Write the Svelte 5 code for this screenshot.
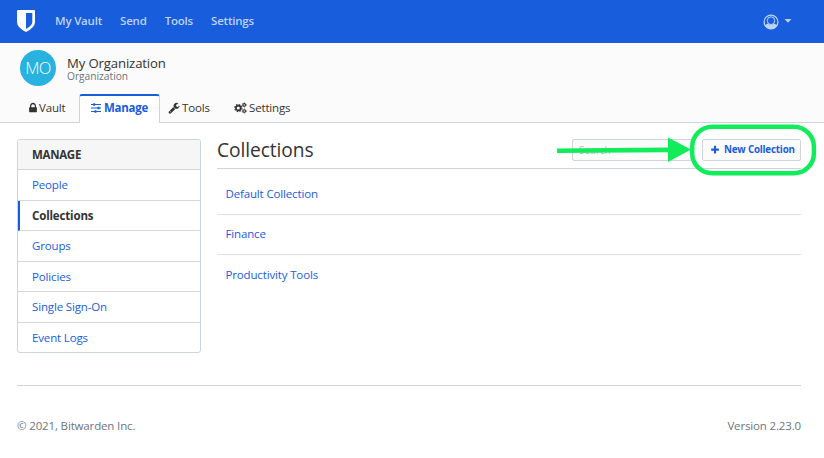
<script>
  const nav = ['My Vault', 'Send', 'Tools', 'Settings'];
  const menu = ['People', 'Collections', 'Groups', 'Policies', 'Single Sign-On', 'Event Logs'];
  const collections = ['Default Collection', 'Finance', 'Productivity Tools'];
</script>

<div class="page">
  <header>
    <svg class="logo" width="18" height="22" viewBox="0 0 18 22">
      <path d="M1 0h16q1 0 1 1v11q0 5.500-9 10Q0 17.500 0 12V1q0-1 1-1z" fill="#fff" />
      <path d="M9 3h6.300v9q0 3.500-6.300 7z" fill="#175ddc" />
    </svg>
    <nav>
      {#each nav as item}<a href="#top">{item}</a>{/each}
    </nav>
    <div class="account">
      <svg width="16" height="16" viewBox="0 0 16 16">
        <circle cx="8" cy="8" r="6.900" fill="none" stroke="currentColor" stroke-width="1.300" />
        <path d="M2.200 12Q3 9.900 5.200 9.500Q8 12.500 10.800 9.500Q13 9.900 13.800 12Q12 15 8 15T2.200 12z" fill="currentColor" />
        <ellipse cx="8" cy="6.700" rx="3.700" ry="3.900" fill="none" stroke="currentColor" stroke-width="1" />
      </svg>
      <svg width="8" height="4" viewBox="0 0 8 4"><path d="M.5 0h7L4 3.700z" fill="currentColor" /></svg>
    </div>
  </header>

  <section class="org">
    <div class="identity">
      <div class="avatar">MO</div>
      <div class="names">
        <div class="name">My Organization</div>
        <div class="kind">Organization</div>
      </div>
    </div>
    <div class="tabs">
      <a class="tab vault" href="#vault">
        <svg width="12" height="12" viewBox="0 0 1792 1792"><path fill="currentColor" d="M640 768h512v-192q0-106-75-181t-181-75-181 75-75 181v192zm832 96v576q0 40-28 68t-68 28h-960q-40 0-68-28t-28-68v-576q0-40 28-68t68-28h32v-192q0-184 132-316t316-132 316 132 132 316v192h32q40 0 68 28t28 68z" /></svg>
        <span>Vault</span>
      </a>
      <a class="tab active" href="#manage">
        <svg width="10" height="10" viewBox="0 0 10 10" fill="currentColor">
          <path d="M0 1h10v1H0zM0 4.500h10v1H0zM0 8h10v1H0z" />
          <rect x="2.200" y="0.200" width="2" height="2.600" rx=".4" />
          <rect x="6.500" y="3.700" width="2" height="2.600" rx=".4" />
          <rect x="3.500" y="7.200" width="2" height="2.600" rx=".4" />
        </svg>
        <span>Manage</span>
      </a>
      <a class="tab tools" href="#tools">
        <svg width="12" height="12" viewBox="0 0 1792 1792"><path fill="currentColor" d="M448 1472q0-26-19-45t-45-19-45 19-19 45 19 45 45 19 45-19 19-45zm644-420l-682 682q-37 37-90 37-52 0-91-37l-106-108q-38-36-38-90 0-53 38-91l681-681q39 98 114.500 173.500t173.500 114.500zm634-435q0 39-23 106-47 134-164.500 217.500t-258.500 83.500q-185 0-316.500-131.500t-131.500-316.500 131.500-316.500 316.500-131.500q58 0 121.500 16.500t107.500 46.500q16 11 16 28t-16 28l-293 169v224l193 107q5-3 79-48.500t135.500-81 70.500-35.500q15 0 23.500 10t8.500 25z" /></svg>
        <span>Tools</span>
      </a>
      <a class="tab settings" href="#settings">
        <svg width="13" height="12" viewBox="0 0 13 12" fill="none" stroke="currentColor">
          <circle cx="4.300" cy="6" r="2.400" stroke-width="1.700" />
          <circle cx="4.300" cy="6" r="3.600" stroke-width="1.100" stroke-dasharray="1.500 1.327" />
          <circle cx="10.200" cy="2.900" r="1.300" stroke-width="1.100" />
          <circle cx="10.200" cy="2.900" r="2" stroke-width=".8" stroke-dasharray="1.100 .995" />
          <circle cx="10.200" cy="9" r="1.300" stroke-width="1.100" />
          <circle cx="10.200" cy="9" r="2" stroke-width=".8" stroke-dasharray="1.100 .995" />
        </svg>
        <span>Settings</span>
      </a>
    </div>
  </section>

  <div class="body">
    <aside>
      <div class="heading">MANAGE</div>
      {#each menu as item}
        <a href="#menu" class:current={item === 'Collections'}>{item}</a>
      {/each}
    </aside>
    <main>
      <div class="title">
        <h1>Collections</h1>
        <div class="search">Search</div>
        <div class="action">
          <button>
            <svg width="10" height="10" viewBox="0 0 1792 1792"><path fill="currentColor" d="M1600 736v192q0 40-28 68t-68 28h-416v416q0 40-28 68t-68 28h-192q-40 0-68-28t-28-68v-416h-416q-40 0-68-28t-28-68v-192q0-40 28-68t68-28h416v-416q0-40 28-68t68-28h192q40 0 68 28t28 68v416h416q40 0 68 28t28 68z" /></svg>
            <span>New Collection</span>
          </button>
          <svg class="callout" width="264" height="56" viewBox="0 0 264 56">
            <rect x="138.200" y="3.700" width="121.700" height="46.500" rx="20" fill="none" stroke="#11ec5b" stroke-width="4.500" />
            <path d="M3 25.500L114 24.500V14.500L137 26.500L114 39V29.200L3 30z" fill="#11ec5b" />
          </svg>
        </div>
      </div>
      {#each collections as item}
        <a class="row" href="#collection">{item}</a>
      {/each}
    </main>
  </div>

  <footer><span>© 2021, Bitwarden Inc.</span><span>Version 2.23.0</span></footer>
</div>

<style>
  :global(body) { background: #fff; }
  .page { width: 824px; height: 458px; overflow: hidden; box-sizing: border-box; font: 11.500px/16px "Open Sans", sans-serif; letter-spacing: -.15px; color: #333; }
  .page * { box-sizing: border-box; }
  a { color: #175ddc; text-decoration: none; white-space: nowrap; }
  svg { flex: none; display: block; }
  header { height: 43px; background: #175ddc; display: flex; align-items: center; padding: 0 32px 0 17px; }
  .logo { margin-bottom: 1px; }
  nav { display: flex; gap: 18px; margin-left: 20px; padding-bottom: 2px; flex: 1; }
  nav a { color: #bed2f6; font-weight: 600; letter-spacing: -.2px; }
  .account { display: flex; align-items: center; gap: 5px; color: #bed2f6; }
  .account svg:last-child { margin-bottom: 2px; }
  .org { height: 80px; background: #fbfbfb; border-bottom: 1px solid #ced4dc; padding: 7px 17px 0 20px; }
  .identity { display: flex; height: 44px; }
  .avatar { width: 36px; height: 36px; border-radius: 50%; background: #27b2df; color: #fff; font-size: 16.500px; font-weight: 300; line-height: 36px; letter-spacing: -.7px; text-align: center; }
  .names { margin-left: 11px; padding-top: 5px; }
  .name { font-size: 13.200px; line-height: 16px; }
  .kind { font-size: 10.200px; line-height: 10px; letter-spacing: 0; color: #6c757d; }
  .tabs { display: flex; height: 29px; margin-bottom: -1px; }
  .tab { display: flex; align-items: center; color: #333; padding-bottom: 2px; }
  .vault { width: 59px; padding-left: 7px; gap: 0; }
  .active { width: 81px; border: 1px solid #ced4dc; border-top: 2px solid #175ddc; border-bottom: 0; border-radius: 3px 3px 0 0; background: #fff; color: #175ddc; font-weight: 700; padding: 0 0 3px 11px; gap: 3px; letter-spacing: -.25px; }
  .tools { width: 65px; padding-left: 8px; gap: 2px; }
  .settings { padding-left: 9px; gap: 2px; }
  .body { display: flex; padding: 16px 23px 0 17px; height: 262px; }
  aside { width: 184px; height: 214px; border: 1px solid #ced4dc; border-radius: 3px; display: flex; flex-direction: column; overflow: hidden; }
  .heading { height: 30px; background: #f6f6f6; border-bottom: 1px solid #ced4dc; padding: 7px 14px; font-weight: 700; letter-spacing: -.3px; }
  aside a { height: 31px; border-bottom: 1px solid #d5d9de; padding: 7px 14px; }
  aside a:nth-child(odd) { height: 30px; }
  aside a:last-child { border: 0; }
  aside .current { color: #333; font-weight: 700; border-left: 2px solid #175ddc; padding-left: 12px; }
  main { flex: 1; margin-left: 16px; }
  .title { height: 30px; border-bottom: 1px solid #ced4dc; display: flex; align-items: flex-start; }
  h1 { font-size: 19.200px; line-height: 22px; font-weight: 400; letter-spacing: -.08px; margin: 0; flex: 1; }
  .search { width: 120px; height: 22px; border: 1px solid #ced4da; border-radius: 2px; background: #fbfbfb; color: #b4b9be; font-size: 10px; line-height: 20px; letter-spacing: 0; padding-left: 6px; }
  .action { position: relative; margin-left: 10px; }
  button { width: 99px; height: 22px; border: 1px solid #ced4da; border-radius: 2px; background: #fbfbfb; color: #175ddc; font: 700 9.800px/16px "Open Sans", sans-serif; letter-spacing: -.2px; padding: 0 0 1px 7px; display: flex; align-items: center; gap: 4px; white-space: nowrap; }
  .callout { position: absolute; left: -148px; top: -16px; }
  .row { display: block; height: 40px; padding: 11px 8.500px; border-bottom: 1px solid #dee2e6; }
  .title + .row { height: 46px; padding-top: 17px; }
  .row:last-child { border: 0; padding-top: 12px; }
  footer { margin: 0 23px 0 17px; border-top: 1px solid #ced4dc; padding-top: 32px; display: flex; justify-content: space-between; color: #6c757d; }
</style>
